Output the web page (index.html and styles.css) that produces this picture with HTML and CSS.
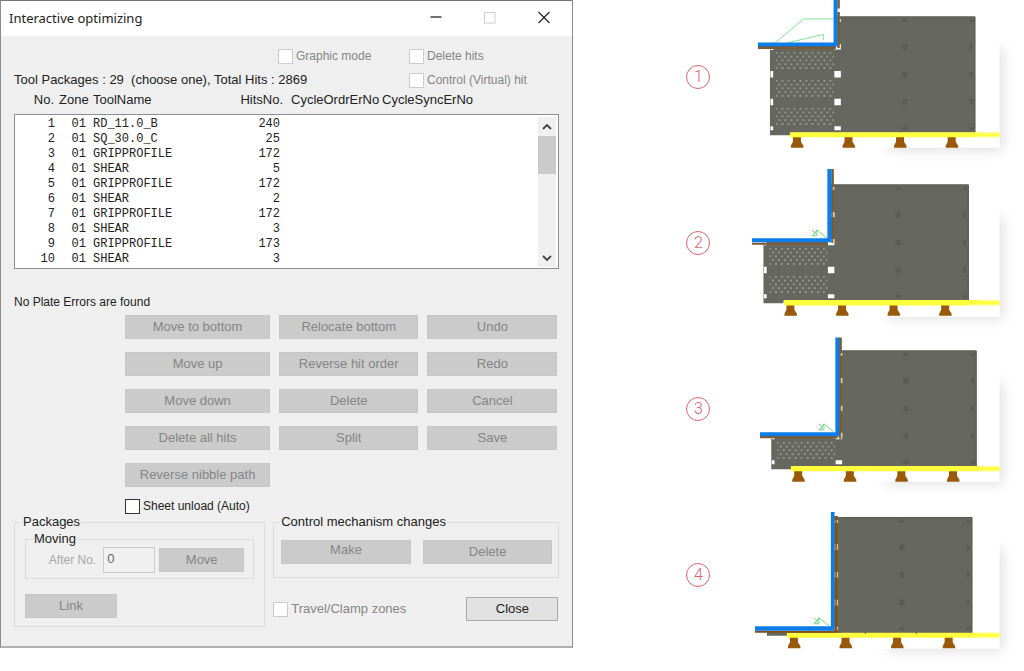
FILE: index.html
```html
<!DOCTYPE html>
<html lang="en">
<head>
<meta charset="utf-8">
<title>Interactive optimizing</title>
<link rel="stylesheet" href="styles.css">
</head>
<body>
<main class="page">
  <section class="dialog" aria-labelledby="dialog-title">
    <header class="titlebar">
      <h1 class="title" id="dialog-title">Interactive optimizing</h1>
      <div class="window-controls">
        <button class="window-button" aria-label="Minimize"><svg width="14" height="14" viewBox="0 0 14 14"><path d="M1.500 6H12.500" stroke="#222" stroke-width="1.300"/></svg></button>
        <button class="window-button" aria-label="Maximize" disabled><svg width="14" height="14" viewBox="0 0 14 14"><rect x="1.500" y="1.500" width="10.500" height="10.500" fill="none" stroke="#ccc"/></svg></button>
        <button class="window-button" aria-label="Close window"><svg width="14" height="14" viewBox="0 0 14 14"><path d="M1.500 1L12.500 12M12.500 1L1.500 12" stroke="#222" stroke-width="1.200"/></svg></button>
      </div>
    </header>
    <div class="content">
      <div class="options">
        <label class="check small off graphic"><input type="checkbox" disabled>Graphic mode</label>
        <label class="check small off"><input type="checkbox" disabled>Delete hits</label>
        <p class="summary">Tool Packages : 29&nbsp; (choose one), Total Hits : 2869</p>
        <label class="check small off"><input type="checkbox" disabled>Control (Virtual) hit</label>
      </div>
      <div class="columns">
        <span class="right">No.</span><span>Zone</span><span>ToolName</span><span class="right">HitsNo.</span><span class="cycle">CycleOrdrErNo</span><span class="cycle">CycleSyncErNo</span>
      </div>
      <div class="listbox">
        <table class="packages-table">
          <tr><td class="no">1</td><td class="zone">01</td><td class="tool">RD_11.0_B</td><td class="hits">240</td></tr>
          <tr><td class="no">2</td><td class="zone">01</td><td class="tool">SQ_30.0_C</td><td class="hits">25</td></tr>
          <tr><td class="no">3</td><td class="zone">01</td><td class="tool">GRIPPROFILE</td><td class="hits">172</td></tr>
          <tr><td class="no">4</td><td class="zone">01</td><td class="tool">SHEAR</td><td class="hits">5</td></tr>
          <tr><td class="no">5</td><td class="zone">01</td><td class="tool">GRIPPROFILE</td><td class="hits">172</td></tr>
          <tr><td class="no">6</td><td class="zone">01</td><td class="tool">SHEAR</td><td class="hits">2</td></tr>
          <tr><td class="no">7</td><td class="zone">01</td><td class="tool">GRIPPROFILE</td><td class="hits">172</td></tr>
          <tr><td class="no">8</td><td class="zone">01</td><td class="tool">SHEAR</td><td class="hits">3</td></tr>
          <tr><td class="no">9</td><td class="zone">01</td><td class="tool">GRIPPROFILE</td><td class="hits">173</td></tr>
          <tr><td class="no">10</td><td class="zone">01</td><td class="tool">SHEAR</td><td class="hits">3</td></tr>
        </table>
        <div class="scrollbar">
          <button class="scroll-button" aria-label="Scroll up"><svg width="10" height="8" viewBox="0 0 10 8"><path d="M1 6L5 2L9 6" fill="none" stroke="#444" stroke-width="1.800"/></svg></button>
          <div class="thumb"></div>
          <button class="scroll-button end" aria-label="Scroll down"><svg width="10" height="8" viewBox="0 0 10 8"><path d="M1 2L5 6L9 2" fill="none" stroke="#444" stroke-width="1.800"/></svg></button>
        </div>
      </div>
      <p class="status small">No Plate Errors are found</p>
      <div class="actions">
        <button class="button" disabled>Move to bottom</button>
        <button class="button" disabled>Relocate bottom</button>
        <button class="button" disabled>Undo</button>
        <button class="button" disabled>Move up</button>
        <button class="button" disabled>Reverse hit order</button>
        <button class="button" disabled>Redo</button>
        <button class="button" disabled>Move down</button>
        <button class="button" disabled>Delete</button>
        <button class="button" disabled>Cancel</button>
        <button class="button" disabled>Delete all hits</button>
        <button class="button" disabled>Split</button>
        <button class="button" disabled>Save</button>
        <button class="button" disabled>Reverse nibble path</button>
      </div>
      <label class="check small sheet-unload"><input type="checkbox">Sheet unload (Auto)</label>
      <div class="bottom">
        <fieldset class="group packages">
          <legend>Packages</legend>
          <fieldset class="group moving">
            <legend>Moving</legend>
            <div class="moving-row">
              <label class="after small" for="after-no">After No.</label>
              <input class="number" id="after-no" type="text" value="0" disabled>
              <button class="button move" disabled>Move</button>
            </div>
          </fieldset>
          <button class="button link" disabled>Link</button>
        </fieldset>
        <div class="side">
          <fieldset class="group control">
            <legend>Control mechanism changes</legend>
            <div class="control-row">
              <button class="button raised" disabled>Make</button>
              <button class="button" disabled>Delete</button>
            </div>
          </fieldset>
          <div class="footer">
            <label class="check off"><input type="checkbox" disabled>Travel/Clamp zones</label>
            <button class="button close">Close</button>
          </div>
        </div>
      </div>
    </div>
  </section>

  <ol class="steps">
    <li class="step">
      <span class="badge">1</span>
      <svg class="drawing" viewBox="740 0 284 166" role="img" aria-label="Sheet with three perforated areas left">
        <defs>
          <filter id="soft" x="-30%" y="-30%" width="160%" height="160%"><feGaussianBlur stdDeviation="7"/></filter>
          <pattern id="holes" x="775.500" y="52" width="6" height="7.600" patternUnits="userSpaceOnUse">
            <circle cx="1" cy="1" r=".75" fill="#d8d8d2"/><circle cx="4" cy="4.800" r=".75" fill="#d8d8d2"/>
          </pattern>
          <g id="shadow">
            <rect x="888" y="48" width="115" height="102" fill="#000" opacity=".13" filter="url(#soft)"/>
            <rect x="740" y="0" width="260" height="148" fill="#fff"/>
          </g>
          <g id="foot"><path d="M-4 136Q-4 135-2 135H2Q4 135 4 136V142L6.500 146V148H-6V146L-4 142Z" fill="#985a0a"/></g>
          <g id="sheet">
            <path d="M770 16.500H975.700V133H790V135.500H770Z" fill="#66675f"/>
            <path d="M840 17H975.200V132.500" fill="none" stroke="#5a5b54"/>
            <path d="M776 52h58v18h-58zM776 80h58v18h-58zM776 108h58v18h-58z" fill="none"/>
            <path d="M776 52h58v18h-58z" fill="url(#holes)"/>
            <path id="band" d="M776 52h58v18h-58z" transform="translate(0 28)" fill="url(#holes)"/>
            <path d="M776 52h58v18h-58z" transform="translate(0 56)" fill="url(#holes)"/>
            <path d="M834.500 71h6.500v6.500h-6.500zM834.500 99h6.500v6.500h-6.500zM834.500 126.500h6.500v4h-6.500zM770.500 71h2.700v6.500h-2.700zM770.500 99h2.700v6.500h-2.700zM770.500 126.500h2.700v4h-2.700zM834.500 45h6.500v4.500h-6.500zM770.500 46h2.700v4h-2.700z" fill="#fff"/>
            <path d="M902.500 19h5v3h-5zM902.500 44h5v5.500h-5zM902.500 72h5v5.500h-5zM902.500 99.500h5v5.500h-5zM902.500 127h5v3h-5zM970 19h4v3h-4zM970 44h3v5.500h-3zM970 72h3v5.500h-3zM970 99.500h3v5.500h-3zM970 127h4v3h-4z" fill="#5b5c54"/>
            <use href="#foot" x="797"/><use href="#foot" x="848.700"/><use href="#foot" x="900.300"/><use href="#foot" x="952"/>
          </g>
          <path id="mark" d="M0 0L-10-8V-2H-15L-12-5L-15-8M-10-8L-13-3" fill="none" stroke="#4cd060" stroke-width=".8"/>
        </defs>
        <use href="#shadow"/>
        <use href="#sheet"/>
        <path d="M740 0H837.500V46H740Z" fill="#fff"/>
        <path d="M790 132.500H1000V137.500H790Z" fill="#ffff3e"/><path d="M980 132.500H1000V134H980ZM976 136.500H1000V137.500H976Z" fill="#ffff9c"/>
        <path d="M758 46H836V49H758ZM837.500 0H840V8.500H837.500ZM837.500 12H840V48H837.500Z" fill="#805a2e"/>
        <path d="M840 19h1v3h-1zM840 44h1v5h-1z" fill="#eee0c8"/>
        <path d="M775 43L804 19H834M787 43L823.500 34.500V40.500" fill="none" stroke="#5fdc78" stroke-width=".8"/>
        <path d="M833.700 0H837.700V46.500H758V42.500H833.700Z" fill="#0a7de8"/>
      </svg>
    </li>
    <li class="step">
      <span class="badge">2</span>
      <svg class="drawing" viewBox="740 0 284 166" role="img" aria-label="Sheet with two perforated areas left">
        <use href="#shadow" y="3"/>
        <use href="#sheet" x="-6.500" y="2"/>
        <path d="M740 0H831V76H740Z" fill="#fff"/>
        <path d="M784 134.300H1000V139.700H784Z" fill="#ffff3e"/><path d="M980 134.300H1000V135.500H980ZM970 138.500H1000V139.700H970Z" fill="#ffff9c"/>
        <path d="M752 76.800H828V79H752ZM831.500 3H834V77H831.500Z" fill="#805a2e"/>
        <path d="M833 21h1.500v3h-1.500zM833 46h1.500v5h-1.500zM833 73h1.500v5h-1.500z" fill="#e8c898"/>
        <use href="#mark" x="827" y="72"/>
        <path d="M827.500 3H831.700V76.300H752V72.300H827.500Z" fill="#0a7de8"/>
      </svg>
    </li>
    <li class="step">
      <span class="badge">3</span>
      <svg class="drawing" viewBox="740 0 284 166" role="img" aria-label="Sheet with one perforated area left">
        <use href="#shadow" y="2"/>
        <use href="#sheet" x="1.300" y="2"/>
        <path d="M740 0H839V104H740Z" fill="#fff"/>
        <path d="M791 134.300H1000V139.500H791Z" fill="#ffff3e"/><path d="M980 134.300H1000V135.500H980ZM978 138.500H1000V139.500H978Z" fill="#ffff9c"/>
        <path d="M760 104H838V106.500H760ZM839 5.500H842V107H839Z" fill="#805a2e"/>
        <path d="M841 21h1.500v3h-1.500zM841 46h1.500v5h-1.500zM841 74h1.500v5h-1.500zM841 101h1.500v5h-1.500z" fill="#e8c898"/>
        <use href="#mark" x="834" y="100"/>
        <path d="M835.500 5.500H839.500V104.300H760V100.300H835.500Z" fill="#0a7de8"/>
      </svg>
    </li>
    <li class="step">
      <span class="badge">4</span>
      <svg class="drawing" viewBox="740 0 284 166" role="img" aria-label="Solid sheet after the last cut">
        <use href="#shadow" y="3"/>
        <use href="#sheet" x="-3" y="2.500"/>
        <path d="M740 0H834.500V134H740Z" fill="#fff"/>
        <path d="M787 135H1000V140H787Z" fill="#ffff3e"/><path d="M980 135H1000V136H980ZM973 139H1000V140H973Z" fill="#ffff9c"/>
        <path d="M755 133H838V135H755ZM834.500 18H838V134H834.500Z" fill="#80501c"/>
        <path d="M838 19H842V134.500H838Z" fill="#66675f"/>
        <path d="M837 22h1.300v3h-1.300zM837 46h1.300v6h-1.300zM837 74h1.300v6h-1.300zM837 102h1.300v6h-1.300zM837 129h1.300v3h-1.300zM834.500 22h1v3h-1zM834.500 46h1v6h-1zM834.500 74h1v6h-1zM834.500 102h1v6h-1z" fill="#e8b888"/>
        <path d="M865 134.500h1v1.500h-1zM916 134.500h1v1.500h-1z" fill="#444"/>
        <use href="#mark" x="829" y="128"/>
        <path d="M831 14H834.700V133H755V128.500H831Z" fill="#0a7de8"/>
      </svg>
    </li>
  </ol>
</main>
</body>
</html>
```

FILE: styles.css
```css
* { box-sizing: border-box; }

body {
  margin: 0;
  background: #fff;
  color: #222;
  font: 13px/16px "Liberation Sans", Arial, sans-serif;
}

p, h1, ol { margin: 0; padding: 0; }
button, input { font: inherit; color: inherit; }
.small { font-size: 12px; }

.page { display: flex; align-items: flex-start; }

.dialog {
  flex: 0 0 56%;
  background: #efefef;
  border: 1px solid #8c8c8c;
  border-bottom: 2px solid #b0b0b0;
  border-top-color: #777;
}

.titlebar {
  display: flex;
  align-items: center;
  justify-content: space-between;
  height: 35px;
  padding: 0 21px 2px 8px;
  background: #fff;
}

.title { font: 400 13px/20px "Noto Sans", "Open Sans", sans-serif; }
.window-controls { display: flex; gap: 40px; }
.window-button, .scroll-button { display: flex; padding: 0; border: 0; background: none; }

.content { padding: 8px 13px 19px; }

.options {
  display: grid;
  grid-template-columns: 264px 131px 1fr;
  grid-auto-rows: 24px;
  align-items: center;
}
.graphic { grid-column: 2; }
.summary { grid-column: 1 / 3; }

.check { display: flex; align-items: center; gap: 3px; white-space: nowrap; }
.check input {
  appearance: none;
  width: 15px;
  height: 15px;
  margin: 0;
  border: 1px solid #333;
  background: #fff;
}
.off { color: #858585; }
.off input { border-color: #ccc; }

.columns {
  display: grid;
  grid-template-columns: 40px 29px 143px 42px 86px 1fr;
  column-gap: 5px;
  white-space: nowrap;
}
.right { display: flex; justify-content: flex-end; }
.cycle { padding-left: 3px; }

.listbox {
  display: flex;
  justify-content: space-between;
  margin-top: 6px;
  padding: 2px 2px 1px;
  border: 1px solid #8b8f99;
  background: #fff;
}
.packages-table {
  align-self: flex-start;
  border-collapse: collapse;
  font: 12px/15px "Liberation Mono", "Courier New", monospace;
}
.packages-table td { padding: 0; }
.no { width: 38px; text-align: right; }
.zone { width: 31px; text-align: right; }
.packages-table .tool { width: 151px; padding-left: 7px; }
.hits { width: 43px; text-align: right; }

.scrollbar { display: flex; flex-direction: column; width: 18px; background: #f0f0f0; }
.scroll-button { justify-content: center; align-items: center; height: 19px; }
.thumb { height: 38px; background: #cbcbcb; }
.end { margin-top: auto; }

.status { margin-top: 25px; }

.actions {
  display: grid;
  grid-template-columns: 145fr 139fr 130fr;
  gap: 13px 9px;
  margin: 5px 2px 0 111px;
}
.button { height: 24px; padding: 0; border: 1px solid #c6c6c6; background: #cbcbcb; }
.button:disabled { color: #858585; }

.sheet-unload { margin: 11px 0 0 111px; }

.bottom { display: grid; grid-template-columns: 251fr 286fr; gap: 8px; }
.group { min-width: 0; margin: 0; border: 1px solid #dcdcdc; }
.group legend { padding: 0 1px; }
.packages { padding: 1px 10px 8px; }
.packages > legend { margin-left: -3px; }
.moving { padding: 0 9px 5px; }
.moving > legend { margin-left: -2px; }
.moving-row { display: flex; align-items: center; gap: 4px; }
.after { flex: 1; padding-right: 3px; text-align: right; color: #a8a8a8; }
.number {
  width: 52px;
  height: 26px;
  padding: 0 3px 4px;
  border: 1px solid #ccc;
  background: #f0f0f0;
  color: #666;
}
.move { width: 85px; }
.link { display: block; width: 92px; margin-top: 15px; }

.control { padding: 10px 6px 13px 7px; }
.control > legend { margin-left: -1px; }
.control-row { display: grid; grid-template-columns: 1fr 1fr; gap: 12px; }
.raised { padding-bottom: 5px; }
.footer { display: flex; align-items: center; justify-content: space-between; margin-top: 19px; padding-right: 1px; }
.close { width: 92px; border-color: #aaa; background: #e1e1e1; }

.steps { flex: 1; padding-left: 113px; list-style: none; }
.step { display: flex; align-items: center; gap: 30px; min-height: 166px; }
.badge {
  flex: none;
  display: flex;
  align-items: center;
  justify-content: center;
  width: 24px;
  height: 24px;
  margin-bottom: 12px;
  border: 1px solid #e0606c;
  border-radius: 50%;
  color: #e0606c;
  font: 300 16px/20px Roboto, sans-serif;
}
.drawing { display: block; flex: 1; min-width: 0; }
```
